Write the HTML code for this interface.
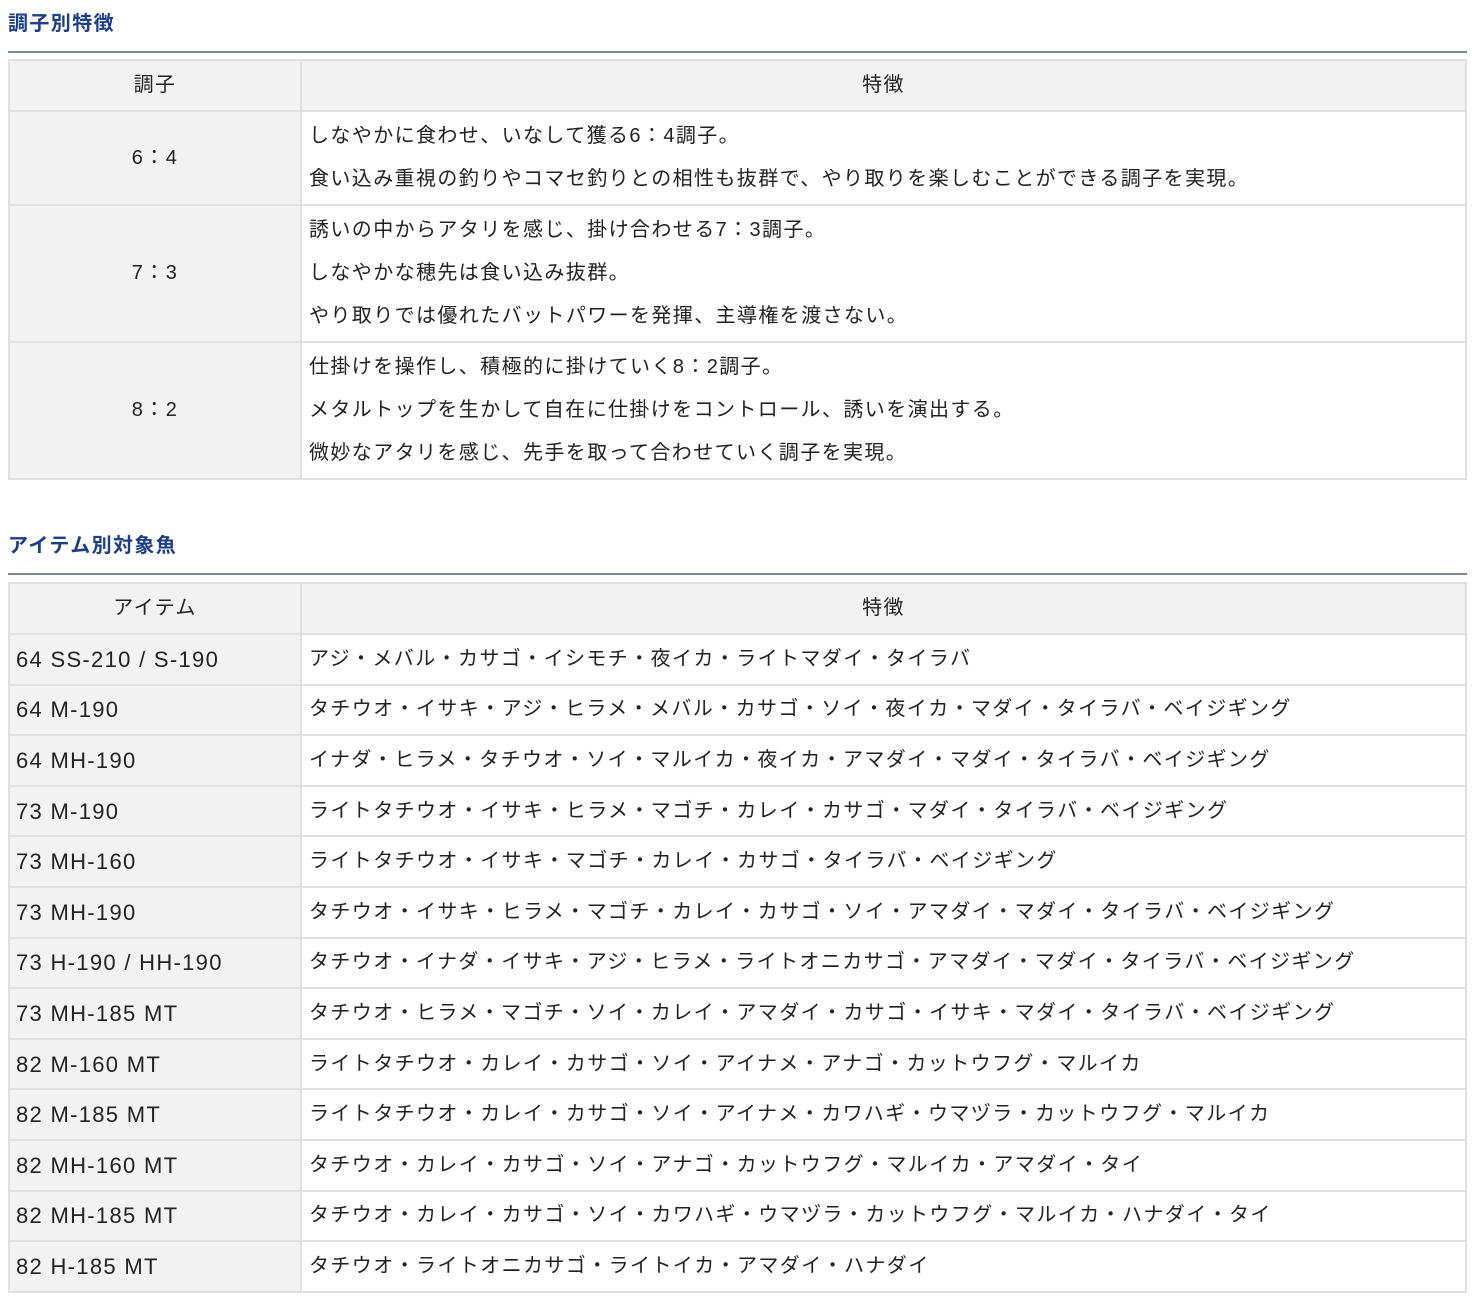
<!DOCTYPE html>
<html><head><meta charset="utf-8"><style>
body{margin:0;background:#fff;font-family:"Liberation Sans","Noto Sans CJK JP",sans-serif;color:#222;}
h2{position:absolute;left:8px;margin:0;font-size:20px;letter-spacing:1.4px;font-weight:bold;color:#1b3f8b;line-height:24px;}
.rule{position:absolute;left:8px;width:1459px;height:2px;background:#7d869a;}
table{position:absolute;left:8px;width:1459px;border-collapse:collapse;font-size:20px;letter-spacing:1.4px;table-layout:fixed;}
td,th{border:2px solid #e0e0e0;padding:0 7px;font-weight:normal;line-height:43px;white-space:nowrap;}
th{background:#f2f2f2;text-align:center;}
td.k{background:#f2f2f2;}
td.c{text-align:center;}
td.m{font-size:22px;letter-spacing:1.3px;padding-left:6px;}
</style></head><body>
<h2 style="top:12px">調子別特徴</h2>
<div class="rule" style="top:51px"></div>
<table style="top:59px">
<colgroup><col style="width:292px"><col></colgroup>
<tr style="height:51px"><th>調子</th><th>特徴</th></tr>
<tr style="height:94px"><td class="k c">6：4</td><td>しなやかに食わせ、いなして獲る6：4調子。<br>食い込み重視の釣りやコマセ釣りとの相性も抜群で、やり取りを楽しむことができる調子を実現。</td></tr>
<tr style="height:137px"><td class="k c">7：3</td><td>誘いの中からアタリを感じ、掛け合わせる7：3調子。<br>しなやかな穂先は食い込み抜群。<br>やり取りでは優れたバットパワーを発揮、主導権を渡さない。</td></tr>
<tr style="height:137px"><td class="k c">8：2</td><td>仕掛けを操作し、積極的に掛けていく8：2調子。<br>メタルトップを生かして自在に仕掛けをコントロール、誘いを演出する。<br>微妙なアタリを感じ、先手を取って合わせていく調子を実現。</td></tr>
</table>
<h2 style="top:534px">アイテム別対象魚</h2>
<div class="rule" style="top:573px"></div>
<table style="top:582px">
<colgroup><col style="width:292px"><col></colgroup>
<tr style="height:51px"><th>アイテム</th><th>特徴</th></tr>
<tr style="height:50.6px"><td class="k m">64 SS-210 / S-190</td><td>アジ・メバル・カサゴ・イシモチ・夜イカ・ライトマダイ・タイラバ</td></tr>
<tr style="height:50.6px"><td class="k m">64 M-190</td><td>タチウオ・イサキ・アジ・ヒラメ・メバル・カサゴ・ソイ・夜イカ・マダイ・タイラバ・ベイジギング</td></tr>
<tr style="height:50.6px"><td class="k m">64 MH-190</td><td>イナダ・ヒラメ・タチウオ・ソイ・マルイカ・夜イカ・アマダイ・マダイ・タイラバ・ベイジギング</td></tr>
<tr style="height:50.6px"><td class="k m">73 M-190</td><td>ライトタチウオ・イサキ・ヒラメ・マゴチ・カレイ・カサゴ・マダイ・タイラバ・ベイジギング</td></tr>
<tr style="height:50.6px"><td class="k m">73 MH-160</td><td>ライトタチウオ・イサキ・マゴチ・カレイ・カサゴ・タイラバ・ベイジギング</td></tr>
<tr style="height:50.6px"><td class="k m">73 MH-190</td><td>タチウオ・イサキ・ヒラメ・マゴチ・カレイ・カサゴ・ソイ・アマダイ・マダイ・タイラバ・ベイジギング</td></tr>
<tr style="height:50.6px"><td class="k m">73 H-190 / HH-190</td><td>タチウオ・イナダ・イサキ・アジ・ヒラメ・ライトオニカサゴ・アマダイ・マダイ・タイラバ・ベイジギング</td></tr>
<tr style="height:50.6px"><td class="k m">73 MH-185 MT</td><td>タチウオ・ヒラメ・マゴチ・ソイ・カレイ・アマダイ・カサゴ・イサキ・マダイ・タイラバ・ベイジギング</td></tr>
<tr style="height:50.6px"><td class="k m">82 M-160 MT</td><td>ライトタチウオ・カレイ・カサゴ・ソイ・アイナメ・アナゴ・カットウフグ・マルイカ</td></tr>
<tr style="height:50.6px"><td class="k m">82 M-185 MT</td><td>ライトタチウオ・カレイ・カサゴ・ソイ・アイナメ・カワハギ・ウマヅラ・カットウフグ・マルイカ</td></tr>
<tr style="height:50.6px"><td class="k m">82 MH-160 MT</td><td>タチウオ・カレイ・カサゴ・ソイ・アナゴ・カットウフグ・マルイカ・アマダイ・タイ</td></tr>
<tr style="height:50.6px"><td class="k m">82 MH-185 MT</td><td>タチウオ・カレイ・カサゴ・ソイ・カワハギ・ウマヅラ・カットウフグ・マルイカ・ハナダイ・タイ</td></tr>
<tr style="height:50.6px"><td class="k m">82 H-185 MT</td><td>タチウオ・ライトオニカサゴ・ライトイカ・アマダイ・ハナダイ</td></tr>
</table>
</body></html>
